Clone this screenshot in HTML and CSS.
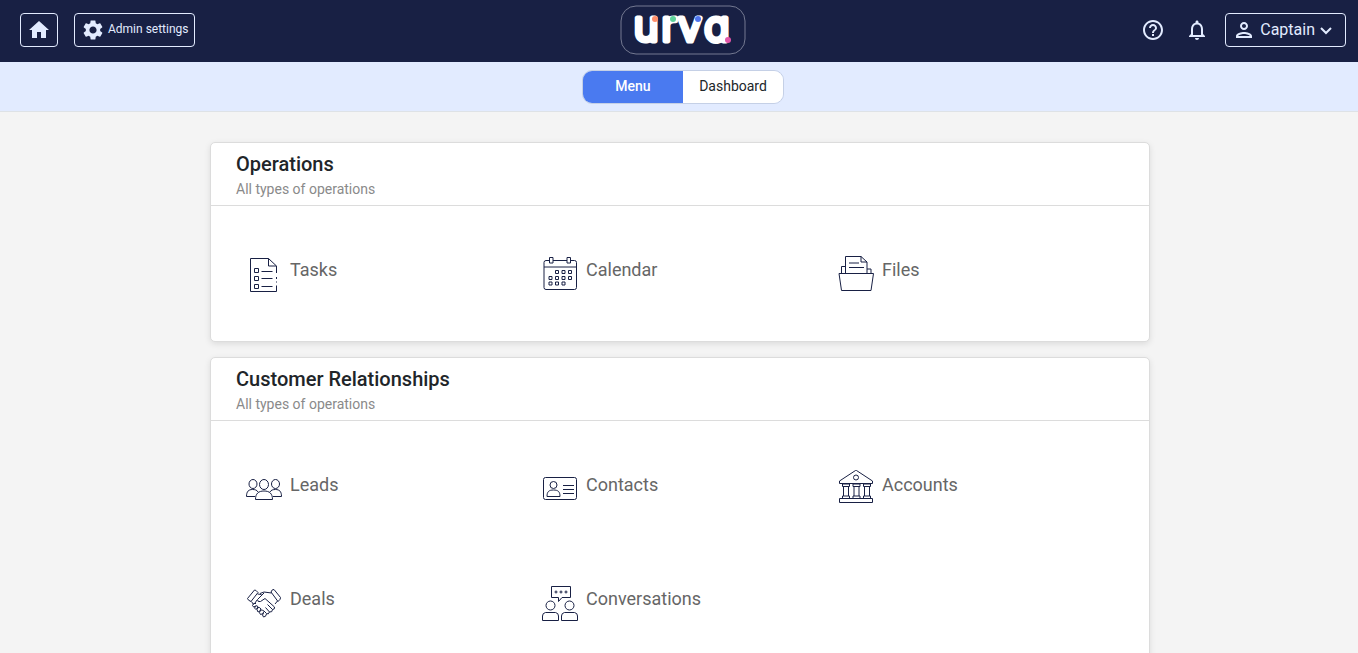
FILE: index.html
```
<!DOCTYPE html>
<html lang="en">
<head>
  <meta charset="UTF-8" />
  <meta name="viewport" content="width=device-width, initial-scale=1" />
  <title>Urva</title>
  <link rel="stylesheet" href="styles.css">
</head>
<body>
  <header class="topbar">
    <div class="topbar-left">
      <button class="outline-btn home-btn" type="button" aria-label="Home">
        <svg width="24" height="24" viewBox="0 0 24 24"><path d="M10 20v-6h4v6h5v-8h3L12 3 2 12h3v8z"/></svg>
      </button>
      <button class="outline-btn admin-btn" type="button">
        <svg width="24" height="24" viewBox="0 0 24 24"><path d="M19.14 12.94c.04-.3.06-.61.06-.94 0-.32-.02-.64-.07-.94l2.03-1.58c.18-.14.23-.41.12-.61l-1.92-3.32c-.12-.22-.37-.29-.59-.22l-2.39.96c-.5-.38-1.03-.7-1.62-.94l-.36-2.54c-.04-.24-.24-.41-.48-.41h-3.84c-.24 0-.43.17-.47.41l-.36 2.54c-.59.24-1.13.57-1.62.94l-2.39-.96c-.22-.08-.47 0-.59.22L2.74 8.87c-.12.21-.08.47.12.61l2.03 1.58c-.05.3-.09.63-.09.94s.02.64.07.94l-2.03 1.58c-.18.14-.23.41-.12.61l1.92 3.32c.12.22.37.29.59.22l2.39-.96c.5.38 1.03.7 1.62.94l.36 2.54c.05.24.24.41.48.41h3.84c.24 0 .44-.17.47-.41l.36-2.54c.59-.24 1.13-.56 1.62-.94l2.39.96c.22.08.47 0 .59-.22l1.92-3.32c.12-.22.07-.47-.12-.61l-2.01-1.58zM12 15.6c-1.98 0-3.6-1.62-3.6-3.6s1.62-3.6 3.6-3.6 3.6 1.62 3.6 3.6-1.62 3.6-3.6 3.6z"/></svg>
        <span>Admin settings</span>
      </button>
    </div>

    <a class="logo" href="#" aria-label="urva">
      <svg width="126" height="50" viewBox="0 0 126 50">
        <rect class="logo-frame" x="1" y="1" width="124" height="48" rx="15"/>
        <g class="logo-text" text-anchor="middle">
          <text x="26" y="36">u</text>
          <text x="49" y="36">r</text>
          <text x="70" y="36">v</text>
          <text x="97" y="36">a</text>
        </g>
        <circle cx="35" cy="14" r="3" fill="#ff8f6b"/>
        <circle cx="53" cy="14" r="3" fill="#5fd39a"/>
        <circle cx="78" cy="14" r="3" fill="#4f74ee"/>
        <circle cx="108" cy="35" r="3" fill="#e255a8"/>
      </svg>
    </a>

    <div class="topbar-right">
      <button class="icon-btn" type="button" aria-label="Help">
        <svg width="24" height="24" viewBox="0 0 24 24"><path d="M11 18h2v-2h-2v2zm1-16C6.480 2 2 6.480 2 12s4.480 10 10 10 10-4.480 10-10S17.520 2 12 2zm0 18c-4.410 0-8-3.590-8-8s3.590-8 8-8 8 3.590 8 8-3.590 8-8 8zm0-14c-2.210 0-4 1.790-4 4h2c0-1.100.9-2 2-2s2 .9 2 2c0 2-3 1.750-3 5h2c0-2.250 3-2.500 3-5 0-2.210-1.790-4-4-4z"/></svg>
      </button>
      <button class="icon-btn" type="button" aria-label="Notifications">
        <svg width="24" height="24" viewBox="0 0 24 24"><path d="M12 22c1.100 0 2-.9 2-2h-4c0 1.100.9 2 2 2zm6-6v-5c0-3.070-1.630-5.640-4.500-6.320V4c0-.83-.67-1.500-1.500-1.500s-1.500.67-1.500 1.500v.68C7.640 5.360 6 7.920 6 11v5l-2 2v1h16v-1l-2-2zm-2 1H8v-6c0-2.480 1.510-4.500 4-4.500s4 2.020 4 4.500v6z"/></svg>
      </button>
      <button class="outline-btn user-btn" type="button">
        <svg width="24" height="24" viewBox="0 0 24 24"><path d="M12 6c1.100 0 2 .9 2 2s-.9 2-2 2-2-.9-2-2 .9-2 2-2m0 10c2.700 0 5.800 1.290 6 2H6c.23-.72 3.310-2 6-2m0-12C9.790 4 8 5.790 8 8s1.790 4 4 4 4-1.790 4-4-1.790-4-4-4zm0 10c-2.670 0-8 1.340-8 4v2h16v-2c0-2.660-5.330-4-8-4z"/></svg>
        <span>Captain</span>
        <svg class="chevron" width="14" height="14" viewBox="0 0 14 14"><path d="M2 5l5 5 5-5"/></svg>
      </button>
    </div>
  </header>

  <nav class="tabbar">
    <div class="tabs">
      <button class="tab active" type="button">Menu</button>
      <button class="tab" type="button">Dashboard</button>
    </div>
  </nav>

  <main class="content">
    <section class="card">
      <div class="card-header">
        <h2>Operations</h2>
        <p>All types of operations</p>
      </div>
      <div class="card-body">
        <a class="item" href="#">
          <svg class="item-icon" viewBox="0 0 36 36">
            <path d="M30.500 29.500v6H4.500v-33h18l8 7.500v7M22.500 2.500V10h8M30.500 21v2M30.500 25.500v1"/>
            <path d="M8.500 12.500h4v4h-4zM8.500 20.500h4v4h-4zM8.500 28.500h4v4h-4zM15.500 15.500h11M15.500 22.500h11M15.500 30.500h11"/>
          </svg>
          <span>Tasks</span>
        </a>
        <a class="item" href="#">
          <svg class="item-icon" viewBox="0 0 36 36">
            <path d="M7.500 4.500H4A2 2 0 0 0 2 6.500v25a2 2 0 0 0 2 2h28.500a2 2 0 0 0 2-2v-25a2 2 0 0 0-2-2H29M11 4.500h14M2 11h32.500M7.500 1.500H11V7H7.500zM25 1.500h3.500V7H25z"/>
            <path d="M13.500 14.500h3v3h-3zM20 14.500h3v3h-3zM26.500 14.500h3v3h-3zM7 20.500h3v3H7zM13.500 20.500h3v3h-3zM20 20.500h3v3h-3zM26.500 20.500h3v3h-3zM7 26h3v3H7zM13.500 26h3v3h-3zM20 26h3v3h-3z"/>
          </svg>
          <span>Calendar</span>
        </a>
        <a class="item" href="#">
          <svg class="item-icon" viewBox="0 0 36 36">
            <path d="M1 17.500h34.500l-2.500 17H3.500zM3.500 17v-6.500h4M7.500 17V.5h15.500l6 5.500v11M23 .5V6h6M29 13h4v4M11 7h10M11 11.500h15"/>
          </svg>
          <span>Files</span>
        </a>
      </div>
    </section>

    <section class="card">
      <div class="card-header">
        <h2>Customer Relationships</h2>
        <p>All types of operations</p>
      </div>
      <div class="card-body">
        <a class="item" href="#">
          <svg class="item-icon" viewBox="0 0 36 36">
            <ellipse cx="7" cy="13" rx="4" ry="4.500"/>
            <ellipse cx="18" cy="13.500" rx="4.500" ry="5"/>
            <ellipse cx="29.500" cy="13" rx="4" ry="4.500"/>
            <path d="M9.500 28.500c0-6 3-8.500 8.500-8.500s8.500 2.500 8.500 8.500zM9 25.500H.5c0-5 2-7 6-7 2.500 0 4.500.5 5.500 2.500M27 25.500h8.500c0-5-2-7-6-7-2.500 0-4.500.5-5.500 2.500"/>
          </svg>
          <span>Leads</span>
        </a>
        <a class="item" href="#">
          <svg class="item-icon" viewBox="0 0 36 36">
            <rect x="1.500" y="6.500" width="33" height="22" rx="2"/>
            <circle cx="11.500" cy="14" r="3.500"/>
            <path d="M5 25.500c0-5 2-6.500 6.500-6.500s6.500 1.500 6.500 6.500zM21 14.500h11M21 18.500h11M21 22.500h11"/>
          </svg>
          <span>Contacts</span>
        </a>
        <a class="item" href="#">
          <svg class="item-icon" viewBox="0 0 36 36">
            <path d="M1.500 10L17.500-.5h1L34.500 10v2.500h-33zM1.500 27.500h33v4h-33z"/>
            <circle cx="18" cy="6.500" r="2.500"/>
            <path d="M4.500 13h7v2.500h-7zM5.500 15.500V25M10.500 15.500V25M4.500 25h7v2.500h-7zM15 13h7v2.500h-7zM16 15.500V25M21 15.500V25M15 25h7v2.500h-7zM25.500 13h7v2.500h-7zM26.500 15.500V25M31.500 15.500V25M25.500 25h7v2.500h-7z"/>
          </svg>
          <span>Accounts</span>
        </a>
        <a class="item" href="#">
          <svg class="item-icon" viewBox="0 0 36 36">
            <path d="M1.500 13.500l7-8.500q1-.5 3.500 2.500l-7 9q-3-1-3.500-3zM25 7q1-3 3-2.500l6.500 8q.5 1.500-2.500 4zM11.500 9l4 .500M5.500 16.500l2 3M14 8.500l4-1.500 7.500 1M31.500 16l-2.500 3"/>
            <path d="M18 8l-6.500 6.500q0 3 3 2l4.500-3 9.500 8.500q.5 2.500-2 2.500l-5-5M26.500 24.500q0 3-3 2.500l-4-4.500M23.500 27q-1 3-3 1.500l-3-3"/>
            <path d="M10 18.500q-3-1-3.500 2 1 3 3 .500M9.500 21q-2 2.500.5 3.500l2-2.500q-.5-2-2.500-1zM12 22.500q-2 2 0 4.500 2 0 3-3-1-2-3-1.500zM14.500 25q-2 3 0 4.500 2.500 0 3.500-3-1-2-3.500-1.500zM17.500 28q-2 2 0 4 2.500 0 3-3M11 15l-2 3"/>
          </svg>
          <span>Deals</span>
        </a>
        <a class="item" href="#">
          <svg class="item-icon" viewBox="0 0 36 36">
            <path d="M9.500 1.500h19v11H20l-3.500 4v-4h-7z"/>
            <circle cx="14" cy="7" r="1"/><circle cx="19" cy="7" r="1"/><circle cx="24" cy="7" r="1"/>
            <circle cx="8.500" cy="20.500" r="4.500"/><circle cx="27.500" cy="20.500" r="4.500"/>
            <path d="M.5 35.500V31q0-3 3-3.500h10q3 .5 3 3.500v4.500zM19.500 35.500V31q0-3 3-3.500h10q3 .5 3 3.500v4.500z"/>
          </svg>
          <span>Conversations</span>
        </a>
      </div>
    </section>
  </main>
</body>
</html>
```
FILE: styles.css
```
* {
  box-sizing: border-box;
}

body {
  margin: 0;
  font-family: Roboto, sans-serif;
  background: #f4f4f4;
  color: #212529;
}

h2, p {
  margin: 0;
}

button {
  font-family: inherit;
  cursor: pointer;
}

a {
  text-decoration: none;
}

/* top bar */
.topbar {
  display: grid;
  grid-template-columns: 1fr auto 1fr;
  align-items: center;
  height: 62px;
  padding: 0 12px 2px 20px;
  background: #182044;
}

.topbar-left,
.topbar-right {
  display: flex;
  align-items: center;
}

.topbar-left {
  gap: 16px;
}

.topbar-right {
  justify-content: flex-end;
  gap: 20px;
}

.topbar svg {
  display: block;
  flex-shrink: 0;
  overflow: visible;
  fill: #e2ebff;
}

.outline-btn {
  display: flex;
  align-items: center;
  height: 34px;
  padding: 0 6px;
  background: transparent;
  color: #e2ebff;
  border: 1px solid #e2ebff;
  border-radius: 4px;
}

.admin-btn {
  gap: 3px;
  padding-right: 5px;
  font-size: 12px;
}

.admin-btn span {
  padding-bottom: 2px;
}

.icon-btn {
  padding: 0;
  background: none;
  border: none;
}

.user-btn {
  gap: 4px;
  padding: 0 12px 0 6px;
  margin-left: -4px;
  font-size: 16px;
}

.user-btn span {
  padding-bottom: 2px;
}

.topbar .chevron {
  fill: none;
  stroke: #e2ebff;
  stroke-width: 2;
}

.topbar .logo-frame {
  fill: none;
  stroke: #747991;
}

.topbar .logo-text {
  font-family: Inter, sans-serif;
  font-size: 42px;
  font-weight: 300;
  font-feature-settings: "cv11";
  fill: #fff;
  stroke: #fff;
  stroke-width: 5;
  stroke-linecap: round;
  stroke-linejoin: round;
}

/* menu / dashboard switch */
.tabbar {
  display: flex;
  justify-content: center;
  padding: 8px 12px 7px 20px;
  background: #e2ebff;
  border-bottom: 1px solid #dee2e6;
}

.tabs {
  display: flex;
  border: 1px solid #c5d0e6;
  border-radius: 10px;
  overflow: hidden;
}

.tab {
  width: 100px;
  height: 32px;
  padding: 0 0 2px;
  border: none;
  background: #fff;
  color: #212529;
  font-size: 14px;
}

.tab.active {
  background: #4a7af0;
  color: #fff;
  font-weight: 500;
}

/* cards */
.content {
  display: flex;
  flex-direction: column;
  align-items: center;
  gap: 15px;
  padding: 30px 12px 30px 14px;
}

.card {
  width: 100%;
  max-width: 940px;
  background: #fff;
  border: 1px solid #dcdcdc;
  border-radius: 5px;
  box-shadow: 0 2px 6px rgba(0, 0, 0, 0.1);
}

.card-header {
  padding: 9px 25px 7px;
  border-bottom: 1px solid #dcdcdc;
}

.card-header h2 {
  font-size: 20px;
  font-weight: 500;
  line-height: 24px;
}

.card-header p {
  padding-top: 4px;
  font-size: 14px;
  line-height: 18px;
  color: #8a8a8a;
}

.card-body {
  display: grid;
  grid-template-columns: repeat(3, 1fr);
  padding: 11px 15px 10px 35px;
}

.item {
  display: flex;
  align-items: center;
  gap: 8px;
  height: 114px;
  color: #666;
  font-size: 18px;
}

.item span {
  padding-bottom: 10px;
}

.item-icon {
  width: 36px;
  height: 36px;
  overflow: visible;
  fill: none;
  stroke: #182044;
  stroke-width: 1;
  stroke-linejoin: round;
}
```
